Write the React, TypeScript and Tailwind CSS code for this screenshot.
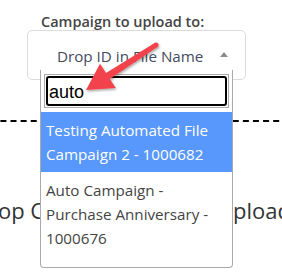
import React from 'react';

const ui = { fontFamily: '"Open Sans", "Noto Sans", sans-serif' };
const arial = { fontFamily: '"Liberation Sans", Arial, sans-serif' };

const Arrow = () => (
	<svg className="absolute left-0 top-0 pointer-events-none" width="282" height="273" viewBox="0 0 282 273">
		<defs>
			<filter id="shadow" x="-20%" y="-20%" width="140%" height="140%">
				<feDropShadow dx="1" dy="1.5" stdDeviation="1.2" floodColor="#000" floodOpacity="0.35"/>
			</filter>
		</defs>
		<g filter="url(#shadow)" fill="#f2434b">
			<polygon points="154.6,42.9 106,72.9 100,63.7 86,90 115.8,88.1 109.8,78.9 157.4,47.1"/>
			<circle cx="156" cy="45" r="2.5"/>
		</g>
	</svg>
);

export default function App() {
	return (
		<div className="relative w-[282px] h-[273px] overflow-hidden bg-white" style={ui}>
			<div className="h-[30px] pl-[41px] pt-[12px] text-[14.5px] leading-[20px] font-semibold text-[#444]">Campaign to upload to:</div>

			<div className="ml-[27px] w-[219px] h-[50px] border border-[#dcdcdc] rounded-[5px] flex items-center pl-[29px]">
				<span className="text-[15.2px] leading-[24px] text-[#434a5e] pt-[2px] whitespace-nowrap">Drop ID in File Name</span>
				<span className="ml-[17px] w-0 h-0 border-l-[4px] border-r-[4px] border-b-[5px] border-l-transparent border-r-transparent border-b-[#8a8a8a] mb-[2px]"/>
			</div>

			<div className="mt-[40px] -ml-[40px] w-[400px] h-[150px] border-t-2 border-dashed border-black">
				<div className="pt-[74px] pl-[13px] whitespace-nowrap text-[22px] leading-[28px] text-[#333]">Drop Campaign Files to Upload</div>
			</div>

			<div className="absolute left-[40px] top-[70px] w-[193px] h-[198px] bg-white border border-t-0 border-[#aaa] rounded-b-[4px] flex flex-col">
				<div className="px-[3px] pt-[4px] pb-[4px]">
					<div className="h-[34px] border border-[#aaa] p-[1px]">
						<div className="h-full border-2 border-black rounded-[3px] pl-[1px] text-[18px] leading-[28px] text-black" style={arial}>auto</div>
					</div>
				</div>
				<div className="bg-[#5897fb] text-white px-[5px] py-[6px] text-[15.2px] leading-[24px]">Testing Automated File Campaign 2 - 1000682</div>
				<div className="text-[#444] px-[5px] py-[6px] text-[15.2px] leading-[24px]">Auto Campaign - Purchase Anniversary - 1000676</div>
			</div>

			<Arrow/>
		</div>
	);
}
